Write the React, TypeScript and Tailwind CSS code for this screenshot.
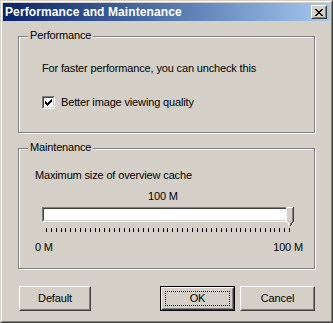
import React from 'react'

const font = "font-['Liberation_Sans',Arial,sans-serif]"

function Button({ label, isDefault }: { label: string; isDefault?: boolean }) {
  if (isDefault) {
    return (
      <div className="w-[75px] h-[25px] border border-black">
        <div className="h-full border border-t-white border-l-white border-r-[#404040] border-b-[#404040]">
          <div className="h-full border border-t-[#d4d0c8] border-l-[#d4d0c8] border-r-[#808080] border-b-[#808080] p-[2px]">
            <div className="h-full border border-dotted border-black flex items-center justify-center text-[11px] text-black">
              {label}
            </div>
          </div>
        </div>
      </div>
    )
  }
  return (
    <div className="w-[75px] h-[25px] border border-t-white border-l-white border-r-[#404040] border-b-[#404040]">
      <div className="h-full border border-t-[#d4d0c8] border-l-[#d4d0c8] border-r-[#808080] border-b-[#808080] flex items-center justify-center text-[11px] text-black">
        {label}
      </div>
    </div>
  )
}

function GroupBox({ title, className, children }: { title: string; className: string; children: React.ReactNode }) {
  return (
    <div className={`relative border border-[#808080] shadow-[inset_1px_1px_0_#fff,1px_1px_0_#fff] ${className}`}>
      <span className="absolute left-[9px] top-[-8px] px-[2px] bg-[#d4d0c8] leading-[13px] text-[11px] text-black">
        {title}
      </span>
      {children}
    </div>
  )
}

export default function App() {
  const ticks = Array.from({ length: 51 })
  return (
    <div className={`w-[333px] h-[323px] ${font} bg-[#d4d0c8] border border-t-[#d4d0c8] border-l-[#d4d0c8] border-r-[#404040] border-b-[#404040]`}>
      <div className="h-full border border-t-white border-l-white border-r-[#808080] border-b-[#808080] p-[1px] flex flex-col">
        {/* title bar */}
        <div className="h-[18px] shrink-0 flex items-center justify-between bg-gradient-to-r from-[#0a246a] to-[#a6caf0] pl-[2px] pr-[3px]">
          <span className="text-white font-bold text-[12px] leading-[14px] tracking-[0.1px]">Performance and Maintenance</span>
          <div className="w-[16px] h-[14px] border border-t-white border-l-white border-r-[#404040] border-b-[#404040]">
            <div className="h-full border border-t-[#d4d0c8] border-l-[#d4d0c8] border-r-[#808080] border-b-[#808080] bg-[#d4d0c8] flex items-center justify-center">
              <svg width="8" height="7" viewBox="0 0 8 7" shapeRendering="crispEdges">
                <path d="M0 0h2v1h-2zM6 0h2v1h-2zM1 1h2v1h-2zM5 1h2v1h-2zM2 2h4v1h-4zM3 3h2v1h-2zM2 4h4v1h-4zM1 5h2v1h-2zM5 5h2v1h-2zM0 6h2v1h-2zM6 6h2v1h-2z" fill="#000" />
              </svg>
            </div>
          </div>
        </div>

        {/* body */}
        <div className="flex-1 px-[15px] pt-[15px] text-[11px] leading-[13px] tracking-[-0.15px] text-black">
          <GroupBox title="Performance" className="h-[97px] pt-[25px] pl-[23px]">
            <div>For faster performance, you can uncheck this</div>
            <div className="mt-[21px] flex items-center gap-[6px]">
              <div className="w-[13px] h-[13px] border border-t-[#808080] border-l-[#808080] border-r-white border-b-white">
                <div className="h-full border border-t-[#404040] border-l-[#404040] border-r-[#d4d0c8] border-b-[#d4d0c8] bg-white flex items-center justify-center">
                  <svg width="7" height="7" viewBox="0 0 7 7" shapeRendering="crispEdges">
                    <path d="M6 0h1v3h-1zM5 1h1v3h-1zM4 2h1v3h-1zM3 3h1v3h-1zM2 4h1v3h-1zM1 3h1v3h-1zM0 2h1v3h-1z" fill="#000" />
                  </svg>
                </div>
              </div>
              <span>Better image viewing quality</span>
            </div>
          </GroupBox>

          <GroupBox title="Maintenance" className="mt-[15px] h-[121px] pt-[20px]">
            <div className="pl-[16px]">Maximum size of overview cache</div>
            <div className="mt-[8px] pl-[129px]">100 M</div>
            <div className="mt-[4px] ml-[23px] w-[251px]">
              <div className="relative w-[251px] h-[15px] border border-t-[#808080] border-l-[#808080] border-r-white border-b-white">
                <div className="h-full border border-t-[#404040] border-l-[#404040] border-r-[#d4d0c8] border-b-[#d4d0c8] bg-white" />
                <svg className="absolute right-[-2px] top-[-1px]" width="8" height="21" viewBox="0 0 8 21" shapeRendering="crispEdges">
                  <path d="M0 0h8v14l-4 6l-4-6z" fill="#d4d0c8" />
                  <path d="M0.5 14V0.5H7" stroke="#fff" fill="none" />
                  <path d="M7.5 0v14l-3.5 5" stroke="#404040" fill="none" />
                  <path d="M6.5 1v13l-3 4.5" stroke="#808080" fill="none" />
                  <path d="M0.5 14l3 4.5" stroke="#fff" fill="none" />
                </svg>
              </div>
              <div className="mt-[6px] ml-[4px] w-[244px] h-[4px] flex justify-between">
                {ticks.map((_, i) => (
                  <div key={i} className="w-px h-[4px] bg-black" />
                ))}
              </div>
            </div>
            <div className="mt-[9px] pl-[16px] pr-[11px] flex justify-between">
              <span>0 M</span>
              <span>100 M</span>
            </div>
          </GroupBox>

          <div className="mt-[17px] pl-[1px] flex">
            <Button label="Default" />
            <div className="ml-[69px]">
              <Button label="OK" isDefault />
            </div>
            <div className="ml-[5px]">
              <Button label="Cancel" />
            </div>
          </div>
        </div>
      </div>
    </div>
  )
}
